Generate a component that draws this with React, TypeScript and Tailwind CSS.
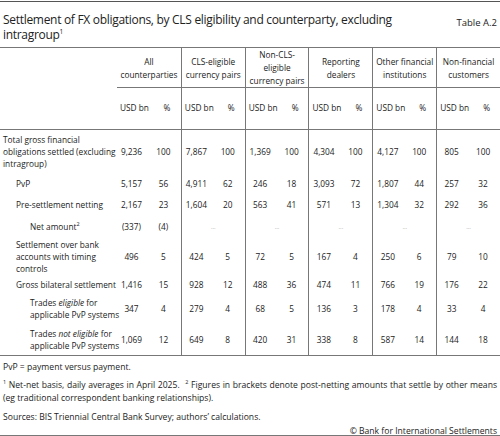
const groups = [
  ["All", "counterparties"],
  ["CLS-eligible", "currency pairs"],
  ["Non-CLS-", "eligible", "currency pairs"],
  ["Reporting", "dealers"],
  ["Other financial", "institutions"],
  ["Non-financial", "customers"],
];

type Row = {
  label: React.ReactNode;
  indent: string;
  h: string;
  vals: (string[] | null)[];
};

const rows: Row[] = [
  {
    label: (
      <>
        Total gross financial
        <br />
        obligations settled (excluding
        <br />
        intragroup)
      </>
    ),
    indent: "pl-[3px]",
    h: "h-[43px]",
    vals: [
      ["9,236", "100"],
      ["7,867", "100"],
      ["1,369", "100"],
      ["4,304", "100"],
      ["4,127", "100"],
      ["805", "100"],
    ],
  },
  {
    label: "PvP",
    indent: "pl-[16px]",
    h: "h-[21px]",
    vals: [
      ["5,157", "56"],
      ["4,911", "62"],
      ["246", "18"],
      ["3,093", "72"],
      ["1,807", "44"],
      ["257", "32"],
    ],
  },
  {
    label: "Pre-settlement netting",
    indent: "pl-[16px]",
    h: "h-[22px]",
    vals: [
      ["2,167", "23"],
      ["1,604", "20"],
      ["563", "41"],
      ["571", "13"],
      ["1,304", "32"],
      ["292", "36"],
    ],
  },
  {
    label: (
      <>
        Net amount<sup className="text-[5.5px] -top-[4px]">2</sup>
      </>
    ),
    indent: "pl-[30px]",
    h: "h-[21px]",
    vals: [["(337)", "(4)"], null, null, null, null, null],
  },
  {
    label: (
      <>
        Settlement over bank
        <br />
        accounts with timing
        <br />
        controls
      </>
    ),
    indent: "pl-[16px]",
    h: "h-[39px]",
    vals: [
      ["496", "5"],
      ["424", "5"],
      ["72", "5"],
      ["167", "4"],
      ["250", "6"],
      ["79", "10"],
    ],
  },
  {
    label: "Gross bilateral settlement",
    indent: "pl-[16px]",
    h: "h-[17px]",
    vals: [
      ["1,416", "15"],
      ["928", "12"],
      ["488", "36"],
      ["474", "11"],
      ["766", "19"],
      ["176", "22"],
    ],
  },
  {
    label: (
      <>
        Trades <i>eligible</i> for
        <br />
        applicable PvP systems
      </>
    ),
    indent: "pl-[30px]",
    h: "h-[32px]",
    vals: [
      ["347", "4"],
      ["279", "4"],
      ["68", "5"],
      ["136", "3"],
      ["178", "4"],
      ["33", "4"],
    ],
  },
  {
    label: (
      <>
        Trades <i>not eligible</i> for
        <br />
        applicable PvP systems
      </>
    ),
    indent: "pl-[30px]",
    h: "h-[30px]",
    vals: [
      ["1,069", "12"],
      ["649", "8"],
      ["420", "31"],
      ["338", "8"],
      ["587", "14"],
      ["144", "18"],
    ],
  },
];

const grid = "grid grid-cols-[117px_repeat(6,minmax(0,1fr))]";

export default function App() {
  return (
    <div
      className="w-[500px] h-[436px] bg-white text-[#222] overflow-hidden"
      style={{ fontFamily: '"Open Sans", "Noto Sans", sans-serif' }}
    >
      {/* Title */}
      <div className="mt-px border-t border-[#555] h-[47px] border-b border-b-[#777] flex justify-between px-[3px]">
        <h1 className="text-[12px] leading-[15px] pt-[10px] whitespace-nowrap tracking-[-0.3px]">
          Settlement of FX obligations, by CLS eligibility and counterparty, excluding
          <br />
          intragroup<sup className="text-[6.5px] -top-[5px]">1</sup>
        </h1>
        <div className="text-[9.5px] pt-[14px] whitespace-nowrap">Table A.2</div>
      </div>

      {/* Header */}
      <div className={`${grid} h-[40px] text-[8.3px] leading-[13px]`}>
        <div />
        {groups.map((g, i) => (
          <div
            key={i}
            className={`flex flex-col items-center justify-center text-center border-b border-[#777] ${
              i > 0 ? "border-l" : ""
            }`}
          >
            {g.map((l) => (
              <span key={l} className="whitespace-nowrap">
                {l}
              </span>
            ))}
          </div>
        ))}
      </div>
      <div className={`${grid} h-[42px] text-[8.3px] border-b border-[#777]`}>
        <div />
        {groups.map((_, i) => (
          <div
            key={i}
            className={`grid grid-cols-[36px_1fr] items-center border-[#777] ${i > 0 ? "border-l" : ""}`}
          >
            <span className="pl-[3px] whitespace-nowrap">USD bn</span>
            <span className="text-center">%</span>
          </div>
        ))}
      </div>

      {/* Body */}
      <div className="border-b border-[#777]">
        {rows.map((r, ri) => (
          <div key={ri} className={`${grid} ${r.h} text-[8.3px] leading-[12px]`}>
            <div className={`${r.indent} flex items-center whitespace-nowrap`}>
              <span>{r.label}</span>
            </div>
            {r.vals.map((v, i) => (
              <div
                key={i}
                className={`border-[#777] ${i > 0 ? "border-l" : ""} ${
                  v ? "grid grid-cols-[29px_1fr] items-center" : "flex items-center justify-center"
                }`}
              >
                {v ? (
                  <>
                    <span className="text-center">{v[0]}</span>
                    <span className="text-center">{v[1]}</span>
                  </>
                ) : (
                  <span className="text-[#999] text-[6px] leading-none">...</span>
                )}
              </div>
            ))}
          </div>
        ))}
      </div>

      {/* Notes */}
      <div className="px-[3px] text-[8.6px] leading-[13px] border-b border-[#777] h-[80px]">
        <p className="pt-[5px]">PvP = payment versus payment.</p>
        <p className="pt-[5px] text-justify">
          <sup className="text-[5.5px] -top-[4px]">1</sup> Net-net basis, daily averages in April 2025.{" "}
          <sup className="text-[5.5px] -top-[4px] pl-[3px]">2</sup> Figures in brackets denote post-netting amounts
          that settle by other means (eg traditional correspondent banking relationships).
        </p>
        <p className="pt-[6px]">Sources: BIS Triennial Central Bank Survey; authors’ calculations.</p>
        <p className="text-right pt-[1px]">© Bank for International Settlements</p>
      </div>
    </div>
  );
}
